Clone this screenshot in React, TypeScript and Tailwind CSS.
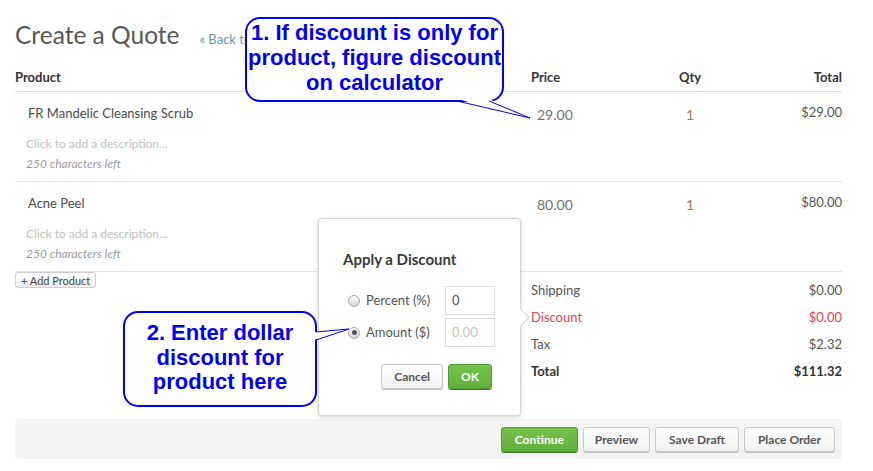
import React from "react";

function Radio({ checked }: { checked?: boolean }) {
  return (
    <span className="flex h-[12px] w-[12px] items-center justify-center rounded-full border border-[#a9a9a9] bg-gradient-to-b from-[#fdfdfd] to-[#d6d6d6]">
      {checked && <span className="h-[5px] w-[5px] rounded-full bg-[#555]" />}
    </span>
  );
}

function ProductRow({ name, price, total }: { name: string; price: string; total: string }) {
  return (
    <div className="grid h-[90px] grid-cols-[516px_109px_100px_1fr] border-b border-[#e3e3e3]">
      <div className="flex flex-col pl-[11px] pt-[11px]">
        <div className="pl-[2px] text-[13px] leading-[20px] text-[#4a4a4a]">{name}</div>
        <div className="mt-[11px] text-[12px] leading-[20px] text-[#c0c0c0]">Click to add a description...</div>
        <div className="text-[12px] italic leading-[20px] text-[#9a9a9a]">250 characters left</div>
      </div>
      <div className="pl-[6px] pt-[13px] text-[14px] leading-[20px] text-[#6f6f6f]">{price}</div>
      <div className="pt-[13px] text-center text-[14px] leading-[20px] text-[#b0773a]">1</div>
      <div className="pt-[10px] text-right text-[13px] leading-[20px] text-[#555]">{total}</div>
    </div>
  );
}

function Btn({ children, green, px = "px-[13px]" }: { children: React.ReactNode; green?: boolean; px?: string }) {
  return (
    <button
      className={
        (green
          ? "h-[25px] rounded-[3px] border border-[#4f9a2f] bg-gradient-to-b from-[#74c14b] to-[#62b03c] text-[12px] font-bold text-white shadow-[0_1px_0_#3f7f24] "
          : "h-[25px] rounded-[3px] border border-[#c8c8c8] bg-gradient-to-b from-[#fdfdfd] to-[#f1f1f1] text-[12px] font-bold text-[#555] shadow-[0_1px_0_#bdbdbd] ") + px
      }
    >
      {children}
    </button>
  );
}

export default function App() {
  return (
    <div className="relative h-[471px] w-[873px] overflow-hidden bg-white text-[#555] [font-family:Lato,'Noto_Sans',sans-serif]">
      <div className="w-[858px] pl-[15px]">
        <div className="w-[827px]">
          {/* Title */}
          <div className="flex items-baseline pt-[20px] leading-[30px]">
            <span className="text-[24.5px] text-[#585858]">Create a Quote</span>
            <span className="ml-[20px] text-[13px] text-[#6d92bd]">« Back to Quotes</span>
          </div>

          {/* Header */}
          <div className="mt-[10px] grid h-[28px] grid-cols-[516px_109px_100px_1fr] items-center border-b border-[#e0e0e0] text-[13px] font-bold text-[#333]">
            <div>Product</div>
            <div>Price</div>
            <div className="text-center">Qty</div>
            <div className="text-right">Total</div>
          </div>

          <ProductRow name="FR Mandelic Cleansing Scrub" price="29.00" total="$29.00" />
          <ProductRow name="Acne Peel" price="80.00" total="$80.00" />

          {/* Add product + summary */}
          <div className="flex justify-between">
            <div>
              <button className="flex h-[16px] items-center rounded-[3px] border border-[#cfcfcf] bg-gradient-to-b from-[#fdfdfd] to-[#f0f0f0] px-[5px] text-[11px] leading-none text-[#444]">
                + Add Product
              </button>
            </div>
            <div className="w-[311px] pt-[5px] text-[13px]">
              <div className="flex h-[27px] items-center justify-between text-[#555]">
                <span>Shipping</span>
                <span>$0.00</span>
              </div>
              <div className="flex h-[27px] items-center justify-between text-[#e8424f]">
                <span>Discount</span>
                <span>$0.00</span>
              </div>
              <div className="flex h-[27px] items-center justify-between text-[#555]">
                <span>Tax</span>
                <span>$2.32</span>
              </div>
              <div className="flex h-[27px] items-center justify-between font-bold text-[#333]">
                <span>Total</span>
                <span>$111.32</span>
              </div>
            </div>
          </div>

          {/* Bottom bar */}
          <div className="mt-[34px] flex h-[40px] items-start justify-end gap-[5px] rounded-[4px] bg-[#f4f4f4] pr-[7px] pt-[8px]">
            <Btn green>Continue</Btn>
            <Btn px="px-[11px]">Preview</Btn>
            <Btn>Save Draft</Btn>
            <Btn>Place Order</Btn>
          </div>
        </div>
      </div>

      {/* Discount popup */}
      <div className="absolute left-[318px] top-[218px] h-[198px] w-[203px] rounded-[4px] border border-[#d4d4d4] bg-white shadow-[0_1px_4px_rgba(0,0,0,0.18)]">
        <div className="absolute right-[-7px] top-[92px] h-[13px] w-[13px] rotate-45 border-r border-t border-[#d4d4d4] bg-white" />
        <div className="px-[24px] pt-[30px] text-[15px] font-bold leading-[20px] text-[#3a3a3a]">Apply a Discount</div>
        <div className="mt-[17px] flex flex-col gap-[3px] pl-[29px]">
          <div className="flex items-center">
            <Radio />
            <span className="ml-[6px] w-[79px] text-[13px] text-[#555]">Percent (%)</span>
            <div className="flex h-[29px] w-[50px] items-center border border-[#dcdcdc] pl-[6px] text-[13px] text-[#555]">0</div>
          </div>
          <div className="flex items-center">
            <Radio checked />
            <span className="ml-[6px] w-[79px] text-[13px] text-[#555]">Amount ($)</span>
            <div className="flex h-[29px] w-[50px] items-center border border-[#dcdcdc] pl-[6px] text-[13px] text-[#c4c4c4]">0.00</div>
          </div>
        </div>
        <div className="mt-[17px] flex justify-end gap-[5px] pr-[28px]">
          <Btn px="px-[12px]">Cancel</Btn>
          <Btn green px="px-[12px]">OK</Btn>
        </div>
      </div>

      {/* Callout 1 */}
      <div className="absolute left-[240px] top-[12px] h-[115px] w-[300px]">
        <svg width="300" height="115" className="absolute left-0 top-0">
          <path
            d="M20,6 H249 A14,14 0 0 1 263,20 V75 A14,14 0 0 1 249,89 H20 A14,14 0 0 1 6,75 V20 A14,14 0 0 1 20,6 Z"
            fill="white"
            stroke="#0000ee"
            strokeWidth="2"
          />
          <polygon points="217,87 290,106 249,87" fill="white" />
          <line x1="217" y1="89" x2="290" y2="106" stroke="#0000ee" strokeWidth="1" />
          <line x1="249" y1="89" x2="290" y2="106" stroke="#0000ee" strokeWidth="1" />
        </svg>
        <div className="absolute left-[6px] top-[8px] w-[257px] text-center text-[22px] font-bold leading-[25px] text-[#0000ee] [font-family:'Liberation_Sans',Arial,sans-serif]">
          1. If discount is only for
          <br />
          product, figure discount
          <br />
          on calculator
        </div>
      </div>

      {/* Callout 2 */}
      <div className="absolute left-[118px] top-[306px] h-[106px] w-[240px]">
        <svg width="240" height="106" className="absolute left-0 top-0">
          <path
            d="M20,6 H184 A14,14 0 0 1 198,20 V86 A14,14 0 0 1 184,100 H20 A14,14 0 0 1 6,86 V20 A14,14 0 0 1 20,6 Z"
            fill="white"
            stroke="#0000ee"
            strokeWidth="2"
          />
          <polygon points="196,26 231,23 196,34" fill="white" />
          <line x1="198" y1="26" x2="231" y2="23" stroke="#0000ee" strokeWidth="1" />
          <line x1="198" y1="34" x2="231" y2="23" stroke="#0000ee" strokeWidth="1" />
        </svg>
        <div className="absolute left-[6px] top-[15px] w-[192px] text-center text-[22px] font-bold leading-[24.5px] text-[#0000ee] [font-family:'Liberation_Sans',Arial,sans-serif]">
          2. Enter dollar
          <br />
          discount for
          <br />
          product here
        </div>
      </div>
    </div>
  );
}
